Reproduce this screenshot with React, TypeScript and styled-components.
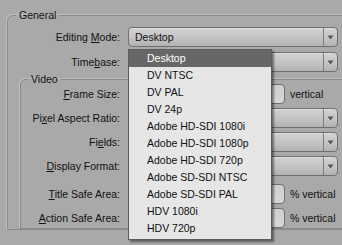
import React from "react";
import styled, { createGlobalStyle } from "styled-components";

const GlobalStyle = createGlobalStyle`
  html, body {
    margin: 0;
    padding: 0;
    background: #a9a9a9;
  }
  body {
    font-family: "Liberation Sans", Arial, sans-serif;
    font-size: 10.5px;
    color: #111;
  }
`;

const Page = styled.div`
  width: 342px;
  height: 245px;
  overflow: hidden;
  background: #a9a9a9;
`;

const Group = styled.fieldset<{ $indent: number; $top: number }>`
  margin: ${(p) => p.$top}px -60px 0 ${(p) => p.$indent}px;
  padding: 0;
  min-width: 0;
  border: 1px solid #8a8a8a;
  border-radius: 6px 0 0 0;
  box-shadow: -1px -1px 0 #bdbdbd;
`;

const Legend = styled.legend<{ $offset: number }>`
  margin-left: ${(p) => p.$offset}px;
  padding: 0 3px;
  line-height: 10px;
  font-size: 10.5px;
  color: #111;
`;

const Rows = styled.div<{ $gap: number; $padTop: number }>`
  display: flex;
  flex-direction: column;
  gap: ${(p) => p.$gap}px;
  padding-top: ${(p) => p.$padTop}px;
`;

const Row = styled.div<{ $labelWidth: number; $extraTop?: number }>`
  display: grid;
  grid-template-columns: ${(p) => p.$labelWidth}px 210px;
  column-gap: 8px;
  align-items: center;
  height: 20px;
  margin-top: ${(p) => p.$extraTop ?? 0}px;
`;

const Label = styled.div`
  text-align: right;
  white-space: nowrap;
`;

const Key = styled.span`
  text-decoration: underline;
  text-underline-offset: 1px;
`;

const ComboWrap = styled.div`
  position: relative;
  height: 20px;
`;

const Combo = styled.div`
  display: flex;
  height: 20px;
  box-sizing: border-box;
  border: 1px solid #6f6f6f;
  border-radius: 4px;
  background: linear-gradient(to bottom, #d3d3d3 0%, #c3c3c3 55%, #b2b2b2 100%);
  box-shadow: inset 0 1px 0 #dedede;
`;

const ComboValue = styled.div`
  flex: 1;
  padding-left: 6px;
  line-height: 18px;
  white-space: nowrap;
  overflow: hidden;
`;

const ArrowButton = styled.div`
  width: 13px;
  border-left: 1px solid #7c7c7c;
  display: flex;
  align-items: center;
  justify-content: center;
`;

const InputLine = styled.div`
  display: flex;
  align-items: center;
  gap: 5px;
`;

const Field = styled.div`
  width: 157px;
  height: 20px;
  box-sizing: border-box;
  border: 1px solid #707070;
  border-radius: 4px;
  background: linear-gradient(to bottom, #cfcfcf, #d6d6d6);
`;

const Unit = styled.span`
  white-space: nowrap;
`;

const Popup = styled.ul`
  position: absolute;
  top: calc(100% + 2px);
  left: 0;
  z-index: 5;
  width: 144px;
  margin: 0;
  padding: 0 0 2px;
  list-style: none;
  box-sizing: border-box;
  background: #e6e6e6;
  border: 1px solid #5d5d5d;
  box-shadow: 2px 2px 2px rgba(0, 0, 0, 0.45);
`;

const Option = styled.li<{ $active?: boolean }>`
  height: 17px;
  line-height: 17px;
  padding-left: 18px;
  white-space: nowrap;
  background: ${(p) => (p.$active ? "#676767" : "transparent")};
  color: ${(p) => (p.$active ? "#fff" : "#111")};
`;

const modes = [
  "Desktop",
  "DV NTSC",
  "DV PAL",
  "DV 24p",
  "Adobe HD-SDI 1080i",
  "Adobe HD-SDI 1080p",
  "Adobe HD-SDI 720p",
  "Adobe SD-SDI NTSC",
  "Adobe SD-SDI PAL",
  "HDV 1080i",
  "HDV 720p",
];

function DropArrow() {
  return (
    <svg width="7" height="5" viewBox="0 0 7 5">
      <path d="M0.5 0.5 H6.5 L3.5 4.5 Z" fill="#555" />
    </svg>
  );
}

function ComboBox({ value, children }: { value?: string; children?: React.ReactNode }) {
  return (
    <ComboWrap>
      <Combo>
        <ComboValue>{value}</ComboValue>
        <ArrowButton>
          <DropArrow />
        </ArrowButton>
      </Combo>
      {children}
    </ComboWrap>
  );
}

function TextField({ unit }: { unit: string }) {
  return (
    <InputLine>
      <Field />
      <Unit>{unit}</Unit>
    </InputLine>
  );
}

export default function App() {
  return (
    <Page>
      <GlobalStyle />
      <Group $indent={7} $top={10}>
        <Legend $offset={8}>General</Legend>
        <Rows $gap={5} $padTop={7}>
          <Row $labelWidth={112}>
            <Label>
              Editing <Key>M</Key>ode:
            </Label>
            <ComboBox value="Desktop">
              <Popup>
                {modes.map((m, i) => (
                  <Option key={m} $active={i === 0}>
                    {m}
                  </Option>
                ))}
              </Popup>
            </ComboBox>
          </Row>
          <Row $labelWidth={112}>
            <Label>
              Time<Key>b</Key>ase:
            </Label>
            <ComboBox />
          </Row>
        </Rows>

        <Group $indent={12} $top={2}>
          <Legend $offset={7}>Video</Legend>
          <Rows $gap={4} $padTop={0}>
            <Row $labelWidth={99}>
              <Label>
                <Key>F</Key>rame Size:
              </Label>
              <TextField unit="vertical" />
            </Row>
            <Row $labelWidth={99}>
              <Label>
                Pi<Key>x</Key>el Aspect Ratio:
              </Label>
              <ComboBox />
            </Row>
            <Row $labelWidth={99}>
              <Label>
                Fi<Key>e</Key>lds:
              </Label>
              <ComboBox />
            </Row>
            <Row $labelWidth={99}>
              <Label>
                <Key>D</Key>isplay Format:
              </Label>
              <ComboBox />
            </Row>
            <Row $labelWidth={99} $extraTop={4}>
              <Label>
                <Key>T</Key>itle Safe Area:
              </Label>
              <TextField unit="% vertical" />
            </Row>
            <Row $labelWidth={99}>
              <Label>
                <Key>A</Key>ction Safe Area:
              </Label>
              <TextField unit="% vertical" />
            </Row>
          </Rows>
        </Group>
      </Group>
    </Page>
  );
}
